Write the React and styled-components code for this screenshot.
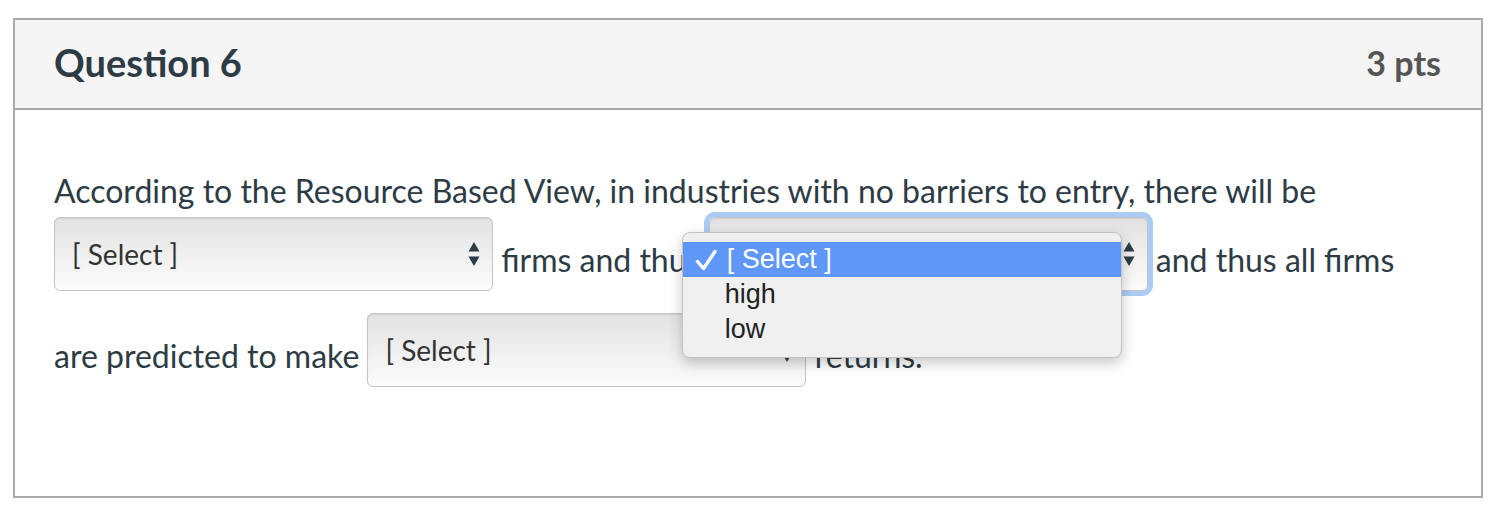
import React from "react";
import styled, { createGlobalStyle } from "styled-components";

const GlobalStyle = createGlobalStyle`
  html, body {
    margin: 0;
    padding: 0;
    background: #ffffff;
  }
  body {
    font-family: Lato, "Liberation Sans", sans-serif;
  }
`;

const Page = styled.div`
  padding: 18px 21px 0 13px;
`;

const Card = styled.div`
  border: 2px solid #a9a9a9;
  height: 480px;
  box-sizing: border-box;
`;

const Header = styled.div`
  display: flex;
  justify-content: space-between;
  align-items: center;
  height: 88px;
  padding: 0 40px 0 39px;
  background: #f5f5f5;
  border-bottom: 2px solid #a9a9a9;
`;

const Title = styled.h2`
  margin: 0;
  font-size: 38px;
  font-weight: 700;
  color: #2d3b45;
  position: relative;
  top: -2px;
`;

const Points = styled.div`
  font-size: 34px;
  font-weight: 700;
  color: #555555;
  position: relative;
  top: -2px;
`;

const Body = styled.div`
  padding: 57px 40px 0 39px;
`;

const Text = styled.div`
  font-size: 32px;
  line-height: 48px;
  color: #2d3b45;
`;

const SelectWrap = styled.span`
  position: relative;
  display: inline-block;
  vertical-align: 7px;
  margin: ${(p) => p.$margin || "0"};
`;

const FakeSelect = styled.span`
  display: inline-flex;
  align-items: center;
  justify-content: space-between;
  box-sizing: border-box;
  width: 439px;
  height: 74px;
  padding: 0 12px 0 17px;
  border: 1px solid #c4c4c4;
  border-radius: 6px;
  background: linear-gradient(#e2e2e2, #efefef 50%, #fcfcfc);
  box-shadow: ${(p) =>
    p.$focused
      ? "0 0 0 5px #a9cbf6, inset 0 1px 1px rgba(0,0,0,0.08)"
      : "inset 0 1px 1px rgba(0,0,0,0.08)"};
  font-size: 28px;
  line-height: 34px;
  color: #333333;
`;

const Arrows = styled.svg`
  width: 12px;
  height: 26px;
  flex: none;
`;

const Menu = styled.div`
  position: absolute;
  left: -27px;
  top: 15px;
  width: 440px;
  box-sizing: border-box;
  padding: 9px 0 10px;
  background: #f0f0f0;
  border: 1px solid #c2c2c2;
  border-radius: 8px;
  box-shadow: 0 5px 14px rgba(0, 0, 0, 0.22);
  font-family: "Liberation Sans", Arial, sans-serif;
  font-size: 27px;
  line-height: 35px;
  z-index: 5;
`;

const Option = styled.div`
  display: flex;
  align-items: center;
  height: 35px;
  padding-left: ${(p) => (p.$selected ? "12px" : "42px")};
  background: ${(p) => (p.$selected ? "#5e97f8" : "transparent")};
  color: ${(p) => (p.$selected ? "#ffffff" : "#222222")};
`;

const CheckIcon = styled.svg`
  width: 22px;
  height: 22px;
  margin-right: 10px;
  flex: none;
`;

const Check = () => (
  <CheckIcon viewBox="0 0 22 22">
    <path
      d="M2.5 12.5 L8.5 19.5 L20 2.5"
      fill="none"
      stroke="#ffffff"
      strokeWidth="3.4"
      strokeLinecap="round"
      strokeLinejoin="round"
    />
  </CheckIcon>
);

const UpDown = () => (
  <Arrows viewBox="0 0 12 26">
    <path d="M6 1 L11.5 10.5 L0.5 10.5 Z" fill="#2d3b45" />
    <path d="M6 25 L11.5 15.5 L0.5 15.5 Z" fill="#2d3b45" />
  </Arrows>
);

const Select = ({ focused, margin, open }) => (
  <SelectWrap $margin={margin}>
    <FakeSelect $focused={focused}>
      <span>{focused ? "\u00a0" : "[ Select ]"}</span>
      <UpDown />
    </FakeSelect>
    {open && (
      <Menu>
        <Option $selected>
          <Check />[ Select ]
        </Option>
        <Option>high</Option>
        <Option>low</Option>
      </Menu>
    )}
  </SelectWrap>
);

export default function App() {
  return (
    <>
      <GlobalStyle />
      <Page>
        <Card>
          <Header>
            <Title>Question 6</Title>
            <Points>3 pts</Points>
          </Header>
          <Body>
            <Text>
              According to the Resource Based View, in industries with no
              barriers to entry, there will be{" "}
              <Select margin="2px 0 20px 0" /> firms and thus{" "}
              <Select focused open margin="2px 0 20px 0" /> and thus all firms
              are predicted to make <Select margin="2px 0 0 0" /> returns.
            </Text>
          </Body>
        </Card>
      </Page>
    </>
  );
}
